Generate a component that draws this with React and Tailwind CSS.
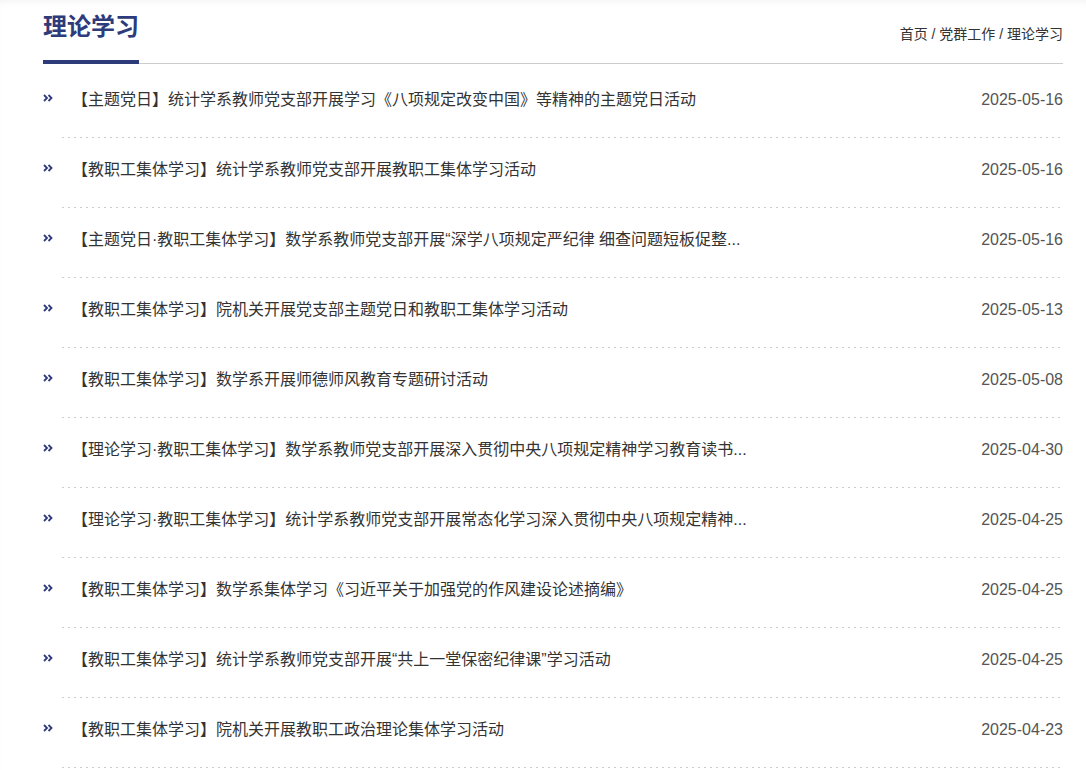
import React from "react";

const items = [
  ["【主题党日】统计学系教师党支部开展学习《八项规定改变中国》等精神的主题党日活动", "2025-05-16"],
  ["【教职工集体学习】统计学系教师党支部开展教职工集体学习活动", "2025-05-16"],
  ["【主题党日·教职工集体学习】数学系教师党支部开展“深学八项规定严纪律 细查问题短板促整...", "2025-05-16"],
  ["【教职工集体学习】院机关开展党支部主题党日和教职工集体学习活动", "2025-05-13"],
  ["【教职工集体学习】数学系开展师德师风教育专题研讨活动", "2025-05-08"],
  ["【理论学习·教职工集体学习】数学系教师党支部开展深入贯彻中央八项规定精神学习教育读书...", "2025-04-30"],
  ["【理论学习·教职工集体学习】统计学系教师党支部开展常态化学习深入贯彻中央八项规定精神...", "2025-04-25"],
  ["【教职工集体学习】数学系集体学习《习近平关于加强党的作风建设论述摘编》", "2025-04-25"],
  ["【教职工集体学习】统计学系教师党支部开展“共上一堂保密纪律课”学习活动", "2025-04-25"],
  ["【教职工集体学习】院机关开展教职工政治理论集体学习活动", "2025-04-23"],
];

function Arrow() {
  return (
    <svg width="10" height="8" viewBox="0 0 10 8" className="block">
      <polyline points="1,1 4,4 1,7" fill="none" stroke="#2d3b7b" strokeWidth="1.8" />
      <polyline points="5.5,1 8.5,4 5.5,7" fill="none" stroke="#2d3b7b" strokeWidth="1.8" />
    </svg>
  );
}

export default function App() {
  return (
    <div
      className="min-h-[770px] bg-white shadow-[inset_0_6px_6px_-4px_rgba(0,0,0,0.05)]"
      style={{ fontFamily: '"Liberation Sans", "Noto Sans CJK SC", sans-serif' }}
    >
      <div className="ml-[43px] w-[1020px]">
        <div className="flex items-end justify-between border-b border-[#cccccc]">
          <div className="pt-[11px] pb-[17px] border-b-4 border-[#2d3b7b] w-[96px] mb-[-1px]">
            <div className="text-[24px] leading-[32px] font-bold text-[#2d3b7b] whitespace-nowrap">理论学习</div>
          </div>
          <div className="text-[14px] leading-[20px] text-[#333] mb-[19px]">
            首页 / 党群工作 / 理论学习
          </div>
        </div>
        <ul className="mt-[4px]">
          {items.map(([t, d], i) => (
            <li key={i} className="flex">
              <div className="w-[19px] shrink-0 pt-[26px]">
                <Arrow />
              </div>
              <div className="flex-1">
                <div className="flex justify-between pl-[10px] pt-[20px] pb-[25px] text-[16px] leading-[24px]">
                  <span className="text-[#333]">{t}</span>
                  <span className="text-[#555]">{d}</span>
                </div>
                <div className="h-px bg-[linear-gradient(to_right,#cccccc_2px,transparent_2px)] bg-[length:6px_1px] bg-repeat-x" />
              </div>
            </li>
          ))}
        </ul>
      </div>
    </div>
  );
}
